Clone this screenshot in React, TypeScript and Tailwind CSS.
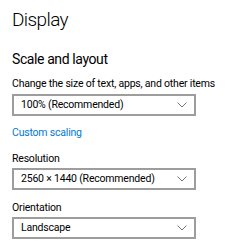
import React from "react";

const Chevron = () => (
  <svg width="10" height="6" viewBox="0 0 10 6" fill="none">
    <path d="M0.5 0.5 L5 5 L9.5 0.5" stroke="#767676" strokeWidth="1" />
  </svg>
);

const Select = ({ label }: { label: string }) => (
  <div className="flex h-[22px] w-[184px] items-center justify-between border-2 border-[#9d9d9d] pl-[7px] pr-[7px] text-[10.5px] tracking-[-0.2px] text-black">
    <span className="whitespace-nowrap leading-none">{label}</span>
    <Chevron />
  </div>
);

export default function App() {
  return (
    <div
      className="h-[245px] w-[249px] overflow-hidden bg-white pl-[12px] text-black"
      style={{ fontFamily: 'Roboto, "Open Sans", sans-serif' }}
    >
      <div className="pt-[6px] text-[19px] font-light leading-[28px] tracking-[-0.6px]">Display</div>
      <div className="mt-[15px] text-[14px] leading-[20px] tracking-[-0.4px]">Scale and layout</div>
      <div className="mt-[7px] whitespace-nowrap text-[10.5px] leading-[16px] tracking-[-0.2px]">Change the size of text, apps, and other items</div>
      <div className="mt-[2px]">
        <Select label="100% (Recommended)" />
      </div>
      <div className="mt-[9px] text-[10.5px] leading-[16px] tracking-[-0.2px] text-[#0078d7]">Custom scaling</div>
      <div className="mt-[10px] text-[10.5px] leading-[16px] tracking-[-0.2px]">Resolution</div>
      <div className="mt-[1px]">
        <Select label="2560 × 1440 (Recommended)" />
      </div>
      <div className="mt-[10px] text-[10.5px] leading-[16px] tracking-[-0.2px]">Orientation</div>
      <div className="mt-[1px]">
        <Select label="Landscape" />
      </div>
    </div>
  );
}
